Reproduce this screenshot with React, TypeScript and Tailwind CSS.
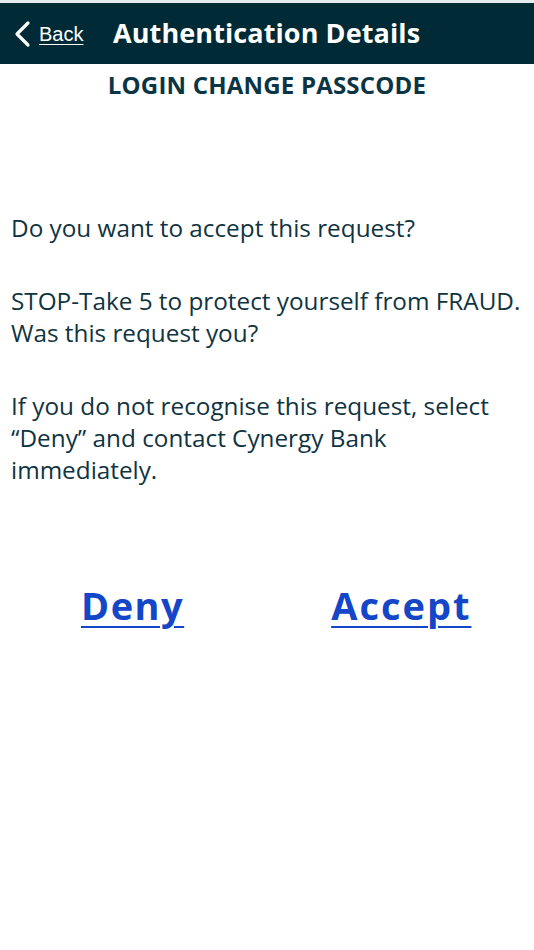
import React from "react";

function Chevron() {
  return (
    <svg width="18" height="28" viewBox="0 0 18 28" fill="none">
      <path d="M15 3 L4 14 L15 25" stroke="white" strokeWidth="3.2" strokeLinecap="round" strokeLinejoin="round" />
    </svg>
  );
}

export default function App() {
  return (
    <div className="w-[534px] h-[950px] bg-white flex flex-col" style={{ fontFamily: '"Open Sans", sans-serif' }}>
      <div className="h-[3px] bg-[#e6ecee]" />
      <header className="h-[61px] bg-[#002a36] flex items-center">
        <div className="flex items-center pl-[13px] w-[110px]">
          <Chevron />
          <span className="ml-[8px] text-[20px] text-white underline underline-offset-[3px] decoration-1" style={{ fontFamily: '"Liberation Sans", Arial, sans-serif' }}>
            Back
          </span>
        </div>
        <h1 className="ml-[3px] text-[27px] font-bold text-white tracking-[0.1px]">Authentication Details</h1>
      </header>
      <h2 className="mt-[6px] text-center text-[24px] font-bold text-[#0b3444] leading-[30px] tracking-[0.2px]">
        LOGIN CHANGE PASSCODE
      </h2>
      <div className="mt-[112px] px-[11px] text-[24.3px] leading-[32px] text-[#10343f] flex flex-col gap-[41px]">
        <p>Do you want to accept this request?</p>
        <p>
          STOP-Take 5 to protect yourself from FRAUD.
          <br />
          Was this request you?
        </p>
        <p>
          If you do not recognise this request, select
          <br />
          “Deny” and contact Cynergy Bank
          <br />
          immediately.
        </p>
      </div>
      <div className="mt-[91px] flex items-center pl-[81px]">
        <a className="text-[38px] font-bold text-[#1446c8] underline underline-offset-[6px] decoration-2 tracking-[1.5px]">Deny</a>
        <a className="ml-[147px] text-[38px] font-bold text-[#1446c8] underline underline-offset-[6px] decoration-2 tracking-[2px]">Accept</a>
      </div>
    </div>
  );
}
